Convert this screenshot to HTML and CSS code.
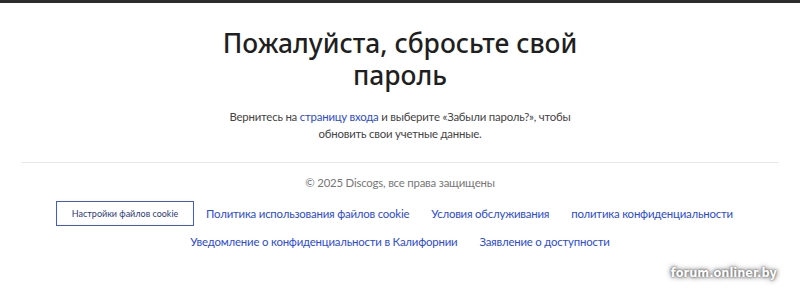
FILE: index.html
```html
<!DOCTYPE html>
<html lang="ru">
<head>
<meta charset="utf-8">
<link rel="stylesheet" href="styles.css">
</head>
<body>
<div class="topbar"></div>
<main class="content">
  <h1 class="title">Пожалуйста, сбросьте свой пароль</h1>
  <p class="lead">Вернитесь на <a href="#" class="link">страницу входа</a> и выберите «Забыли пароль?», чтобы обновить свои учетные данные.</p>
</main>
<footer class="footer">
  <p class="copy">© 2025 Discogs, все права защищены</p>
  <nav class="links">
    <button class="cookie-btn" type="button">Настройки файлов cookie</button>
    <a href="#" class="flink">Политика использования файлов cookie</a>
    <a href="#" class="flink">Условия обслуживания</a>
    <a href="#" class="flink">политика конфиденциальности</a>
    <a href="#" class="flink">Уведомление о конфиденциальности в Калифорнии</a>
    <a href="#" class="flink">Заявление о доступности</a>
  </nav>
</footer>
<div class="watermark">forum.onliner.by</div>
</body>
</html>
```
FILE: styles.css
```css
* { box-sizing: border-box; }
html, body { margin: 0; padding: 0; background: #fff; }
body {
  font-family: Lato, Roboto, sans-serif;
  color: #222;
  width: 800px;
  height: 294px;
  overflow: hidden;
  position: relative;
}
.topbar { height: 3px; background: #2b2b2b; }
.content {
  text-align: center;
  padding: 24px 21px 0;
}
.title {
  margin: 0 auto;
  max-width: 380px;
  font-family: "Noto Sans", sans-serif;
  font-size: 26.4px;
  line-height: 32px;
  font-weight: 500;
  color: #1f1f22;
}
.lead {
  margin: 17px auto 0;
  max-width: 350px;
  font-size: 11.4px;
  letter-spacing: -0.2px;
  line-height: 17px;
  color: #444;
}
.link { color: #2b4bd8; text-decoration: none; }
.footer {
  margin: 20px 21px 0;
  border-top: 1px solid #e8e8e8;
  text-align: center;
  padding-top: 11px;
}
.copy {
  margin: 0;
  font-size: 11.4px;
  letter-spacing: -0.2px;
  line-height: 18px;
  color: #777;
}
.links {
  margin-top: 9px;
  display: flex;
  flex-wrap: wrap;
  justify-content: center;
  align-items: center;
  row-gap: 5px;
}
.cookie-btn {
  width: 138px;
  height: 25px;
  border: 1px solid #3f5ad8;
  background: #fff;
  color: #2d3a78;
  font-family: Lato, Roboto, sans-serif;
  font-size: 9px;
  padding: 0;
  margin-right: 1px;
  cursor: pointer;
}
.flink {
  font-size: 11.4px;
  letter-spacing: -0.2px;
  line-height: 22px;
  color: #2b4bd8;
  text-decoration: none;
  padding: 0 11px;
}
.watermark {
  position: absolute;
  right: 20px;
  bottom: 13px;
  font-family: "DejaVu Sans", sans-serif;
  font-weight: bold;
  font-size: 11.4px;
  line-height: 14px;
  color: #fff;
  padding: 1px 3px;
  text-shadow: 0 0 2px #555, 0 0 4px #777, 0 0 6px #999;
}
```
